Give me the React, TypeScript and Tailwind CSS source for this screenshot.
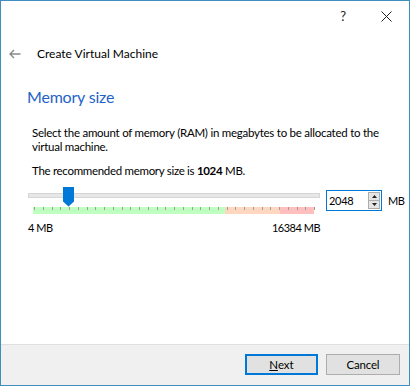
import React from "react";

const TICKS = Array.from({ length: 33 }, (_, i) => i);

function Slider() {
  return (
    <div className="relative w-[292px] h-[28px]">
      {/* track */}
      <div className="mt-[7px] h-[5px] border border-[#d6d6d6] bg-[#e7e7e7]" />
      {/* band */}
      <div className="mt-[9px] ml-[5px] flex h-[7px] w-[281px]">
        <div className="w-[192px] bg-[#bfffbf]" />
        <div className="w-[55px] bg-[#ffd6bf]" />
        <div className="w-[34px] bg-[#ffbfbf]" />
      </div>
      <svg className="absolute left-[5px] top-[21px]" width="282" height="4">
        {TICKS.map((i) => (
          <rect key={i} x={Math.round(1 + i * 8.75)} y={0} width={1} height={3} fill="#9c9c9c" />
        ))}
      </svg>
      {/* thumb */}
      <svg className="absolute left-[35px] top-[1px]" width="11" height="20" viewBox="0 0 11 20">
        <path d="M0 0H11V14.5L5.5 19.5L0 14.5Z" fill="#0078d7" />
      </svg>
    </div>
  );
}

export default function App() {
  return (
    <div className="w-[410px] h-[386px] border border-[#3f8ebf] bg-white flex flex-col text-black text-[12px] font-['Lato',sans-serif]">
      {/* title bar */}
      <div className="h-[30px] flex items-center justify-end">
        <span className="text-[13px] leading-none mr-[35px] text-[#222]">?</span>
        <svg width="11" height="11" viewBox="0 0 11 11" className="mr-[17px]">
          <path d="M0.5 0.5L10.5 10.5M10.5 0.5L0.5 10.5" stroke="#222" strokeWidth="1" />
        </svg>
      </div>
      {/* header */}
      <div className="mt-[13px] h-[20px] flex items-center pl-[8px]">
        <svg width="12" height="10" viewBox="0 0 12 10" className="mr-[16px]">
          <path d="M11.5 5H1.2M5 1L1 5L5 9" stroke="#8a8a8a" strokeWidth="1.4" fill="none" />
        </svg>
        <span className="leading-[20px]">Create Virtual Machine</span>
      </div>
      {/* content */}
      <div className="mt-[22px] pl-[26px] h-[22px] leading-[22px] text-[16px] tracking-[-0.2px] text-[#1f63c6]">Memory size</div>
      <div className="mt-[18px] pl-[31px] pr-[10px] leading-[14px] text-[11.5px] tracking-[-0.25px]">
        Select the amount of memory (RAM) in megabytes to be allocated to the virtual machine.
      </div>
      <div className="mt-[10px] pl-[31px] leading-[14px] text-[11.5px] tracking-[-0.3px]">
        The recommended memory size is <b>1024</b> MB.
      </div>
      <div className="mt-[8px] pl-[27px] flex items-start">
        <Slider />
        <div className="ml-[6px] mt-[4px] w-[56px] h-[21px] border border-[#0078d7] flex items-center justify-between">
          <span className="pl-[2px] leading-[19px] text-[11px] tracking-[-0.3px]">2048</span>
          <div className="mr-[1px] w-[12px] h-[17px] border border-[#adadad] bg-[#e5e5e5] flex flex-col">
            <div className="flex-1 flex items-center justify-center border-b border-[#adadad]">
              <svg width="5" height="3" viewBox="0 0 5 3"><path d="M2.5 0L5 3H0Z" fill="#222" /></svg>
            </div>
            <div className="flex-1 flex items-center justify-center">
              <svg width="5" height="3" viewBox="0 0 5 3"><path d="M0 0H5L2.5 3Z" fill="#222" /></svg>
            </div>
          </div>
        </div>
        <span className="ml-[6px] mt-[4px] leading-[21px] text-[11px] tracking-[-0.4px]">MB</span>
      </div>
      <div className="mt-[7px] pl-[27px] w-[319px] flex justify-between leading-[14px] text-[11px] tracking-[-0.5px]">
        <span>4 MB</span>
        <span>16384 MB</span>
      </div>
      <div className="flex-1" />
      {/* button bar */}
      <div className="h-[41px] border-t border-[#dfdfdf] bg-[#f0f0f0] flex items-start justify-end pt-[9px] pr-[9px] gap-[8px] text-[11.5px]">
        <button className="w-[73px] h-[21px] border-2 border-[#0078d7] bg-[#e1e1e1] leading-[17px]">
          <span className="underline">N</span>ext
        </button>
        <button className="w-[74px] h-[21px] border border-[#adadad] bg-[#e1e1e1] leading-[19px] tracking-[-0.2px]">Cancel</button>
      </div>
    </div>
  );
}
